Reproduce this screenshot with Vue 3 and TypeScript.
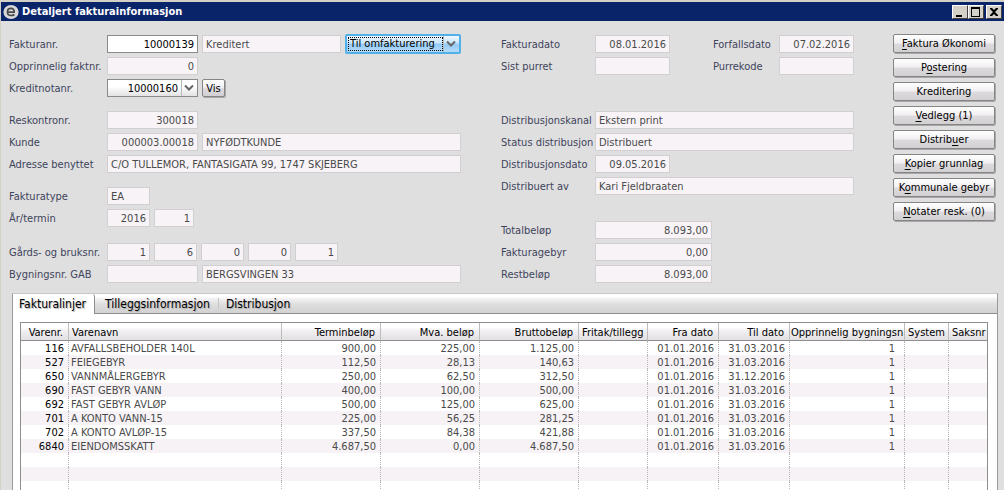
<script setup lang="ts">
import { ref } from 'vue'

interface Column { name: string; width?: number; align: 'left' | 'right' }

const columns: Column[] = [
  { name: 'Varenr.', width: 48, align: 'right' },
  { name: 'Varenavn', align: 'left' },
  { name: 'Terminbeløp', width: 99, align: 'right' },
  { name: 'Mva. beløp', width: 99, align: 'right' },
  { name: 'Bruttobeløp', width: 99, align: 'right' },
  { name: 'Fritak/tillegg', width: 69, align: 'left' },
  { name: 'Fra dato', width: 71, align: 'right' },
  { name: 'Til dato', width: 71, align: 'right' },
  { name: 'Opprinnelig bygningsn', width: 115, align: 'left' },
  { name: 'System', width: 44, align: 'left' },
  { name: 'Saksnr', width: 38, align: 'left' },
]

const blank: string[] = ['', '', '', '', '', '', '', '', '', '', '']
const rows: string[][] = [
  ['116', 'AVFALLSBEHOLDER 140L', '900,00', '225,00', '1.125,00', '', '01.01.2016', '31.03.2016', '1', '', ''],
  ['527', 'FEIEGEBYR', '112,50', '28,13', '140,63', '', '01.01.2016', '31.03.2016', '1', '', ''],
  ['650', 'VANNMÅLERGEBYR', '250,00', '62,50', '312,50', '', '01.01.2016', '31.12.2016', '1', '', ''],
  ['690', 'FAST GEBYR VANN', '400,00', '100,00', '500,00', '', '01.01.2016', '31.03.2016', '1', '', ''],
  ['692', 'FAST GEBYR AVLØP', '500,00', '125,00', '625,00', '', '01.01.2016', '31.03.2016', '1', '', ''],
  ['701', 'A KONTO VANN-15', '225,00', '56,25', '281,25', '', '01.01.2016', '31.03.2016', '1', '', ''],
  ['702', 'A KONTO AVLØP-15', '337,50', '84,38', '421,88', '', '01.01.2016', '31.03.2016', '1', '', ''],
  ['6840', 'EIENDOMSSKATT', '4.687,50', '0,00', '4.687,50', '', '01.01.2016', '31.03.2016', '1', '', ''],
  blank, blank, blank, blank,
]

// Each action label is split around its underlined access key.
const actions: [string, string, string][] = [
  ['', 'F', 'aktura Økonomi'],
  ['P', 'o', 'stering'],
  ['Kreditering', '', ''],
  ['', 'V', 'edlegg (1)'],
  ['Distrib', 'u', 'er'],
  ['', 'K', 'opier grunnlag'],
  ['K', 'o', 'mmunale gebyr'],
  ['', 'N', 'otater resk. (0)'],
]

const tabs = ['Fakturalinjer', 'Tilleggsinformasjon', 'Distribusjon']
const activeTab = ref(0)
const property = ['1', '6', '0', '0', '1']
const invoiceNo = ref('10000139')
const creditNote = ref('10000160')
const status = ref('Til omfakturering')
</script>

<template>
  <div class="window">
    <header class="titlebar">
      <svg class="logo" viewBox="0 0 16 16" aria-hidden="true">
        <ellipse cx="8" cy="8" rx="7.6" ry="7" fill="#d9d9d9" />
        <path d="M4.6 8.1H11.2C11.2 5.8 9.9 4.4 8 4.4C5.8 4.4 4.4 6 4.4 8C4.4 10.2 5.9 11.5 8.1 11.5C9.4 11.5 10.5 11.2 11.4 10.5" fill="none" stroke="#4a4a4a" stroke-width="1.600" />
      </svg>
      <h1>Detaljert fakturainformasjon</h1>
      <div class="controls">
        <button type="button" aria-label="Minimer"><svg viewBox="0 0 14 12"><path d="M3 9h6v2H3z" /></svg></button>
        <button type="button" aria-label="Maksimer"><svg viewBox="0 0 14 12"><path d="M2 1h9v10H2zM3 3v7h7V3z" fill-rule="evenodd" /></svg></button>
        <button type="button" class="close" aria-label="Lukk"><svg viewBox="0 0 14 12"><path d="M3 2h2l2 2 2-2h2v1L8 6l3 3v1H9L7 8l-2 2H3V9l3-3-3-3z" /></svg></button>
      </div>
    </header>

    <main class="body">
      <form class="form" @submit.prevent>
        <div class="column">
          <div class="group">
            <div class="row">
              <label for="fakturanr">Fakturanr.</label>
              <input id="fakturanr" v-model="invoiceNo" class="w-number num editable">
              <input class="grow" value="Kreditert" aria-label="Status" readonly>
              <div class="combo focus">
                <select v-model="status" aria-label="Handling"><option>Til omfakturering</option></select>
                <svg class="arrow" viewBox="0 0 10 8" aria-hidden="true"><path d="M1 1.500L5 5.500L9 1.500" /></svg>
              </div>
            </div>
            <div class="row">
              <label for="opprinnelig">Opprinnelig faktnr.</label>
              <input id="opprinnelig" class="w-number num" value="0" readonly>
            </div>
            <div class="row">
              <label for="kreditnota">Kreditnotanr.</label>
              <div class="combo w-number">
                <select id="kreditnota" v-model="creditNote" class="num"><option>10000160</option></select>
                <svg class="arrow" viewBox="0 0 10 8" aria-hidden="true"><path d="M1 1.500L5 5.500L9 1.500" /></svg>
              </div>
              <button type="button" class="btn vis">Vis</button>
            </div>
          </div>
          <div class="group">
            <div class="row">
              <label for="reskontro">Reskontronr.</label>
              <input id="reskontro" class="w-number num" value="300018" readonly>
            </div>
            <div class="row">
              <label for="kunde">Kunde</label>
              <input id="kunde" class="w-number num" value="000003.00018" readonly>
              <input class="grow" value="NYFØDTKUNDE" aria-label="Kundenavn" readonly>
            </div>
            <div class="row">
              <label for="adresse">Adresse benyttet</label>
              <input id="adresse" class="grow" value="C/O TULLEMOR, FANTASIGATA 99, 1747 SKJEBERG" readonly>
            </div>
          </div>
          <div class="group g-type">
            <div class="row">
              <label for="type">Fakturatype</label>
              <input id="type" class="w-small" value="EA" readonly>
            </div>
            <div class="row">
              <label for="aar">År/termin</label>
              <input id="aar" class="w-small num" value="2016" readonly>
              <input class="w-term num" value="1" aria-label="Termin" readonly>
            </div>
          </div>
          <div class="group">
            <div class="row">
              <label for="gard0">Gårds- og bruksnr.</label>
              <input v-for="(p, i) in property" :id="'gard' + i" :key="i" class="w-small num" :value="p" :aria-label="'Gårds- og bruksnr. ' + (i + 1)" readonly>
            </div>
            <div class="row">
              <label for="bygning">Bygningsnr. GAB</label>
              <input id="bygning" class="w-number" value="" readonly>
              <input class="grow" value="BERGSVINGEN 33" aria-label="Gateadresse" readonly>
            </div>
          </div>
        </div>

        <div class="column second">
          <div class="group g-dates">
            <div class="row">
              <label for="fdato">Fakturadato</label>
              <input id="fdato" class="w-date num" value="08.01.2016" readonly>
              <label for="forfall" class="end">Forfallsdato</label>
              <input id="forfall" class="w-date num" value="07.02.2016" readonly>
            </div>
            <div class="row">
              <label for="purret">Sist purret</label>
              <input id="purret" class="w-date" value="" readonly>
              <label for="purrekode" class="end">Purrekode</label>
              <input id="purrekode" class="w-date" value="" readonly>
            </div>
          </div>
          <div class="group g-distribution">
            <div class="row">
              <label for="kanal">Distribusjonskanal</label>
              <input id="kanal" class="grow" value="Ekstern print" readonly>
            </div>
            <div class="row">
              <label for="dstatus">Status distribusjon</label>
              <input id="dstatus" class="grow" value="Distribuert" readonly>
            </div>
            <div class="row">
              <label for="ddato">Distribusjonsdato</label>
              <input id="ddato" class="w-date num" value="09.05.2016" readonly>
            </div>
            <div class="row">
              <label for="dav">Distribuert av</label>
              <input id="dav" class="grow" value="Kari Fjeldbraaten" readonly>
            </div>
          </div>
          <div class="group">
            <div class="row">
              <label for="total">Totalbeløp</label>
              <input id="total" class="w-amount num" value="8.093,00" readonly>
            </div>
            <div class="row">
              <label for="gebyr">Fakturagebyr</label>
              <input id="gebyr" class="w-amount num" value="0,00" readonly>
            </div>
            <div class="row">
              <label for="rest">Restbeløp</label>
              <input id="rest" class="w-amount num" value="8.093,00" readonly>
            </div>
          </div>
        </div>

        <div class="actions">
          <button v-for="(a, i) in actions" :key="i" type="button" class="btn">{{ a[0] }}<u v-if="a[1]">{{ a[1] }}</u>{{ a[2] }}</button>
        </div>
      </form>

      <section class="panel">
        <div class="tabs" role="tablist">
          <button v-for="(t, i) in tabs" :key="t" type="button" role="tab" :aria-selected="activeTab === i" :class="{ active: activeTab === i }" @click="activeTab = i">{{ t }}</button>
        </div>
        <div class="sheet">
          <table>
            <colgroup>
              <col v-for="c in columns" :key="c.name" :style="c.width ? { width: c.width + 'px' } : undefined">
            </colgroup>
            <thead>
              <tr><th v-for="(c, j) in columns" :key="c.name" :class="[c.align, { building: j === 8 }]">{{ c.name }}</th></tr>
            </thead>
            <tbody>
              <tr v-for="(r, i) in rows" :key="i">
                <td v-for="(v, j) in r" :key="j" :class="j === 8 ? 'right building' : columns[j].align">{{ v }}</td>
              </tr>
            </tbody>
          </table>
        </div>
      </section>
    </main>
  </div>
</template>

<style>
body { margin: 0; overflow: hidden; }
</style>

<style scoped>
* { box-sizing: border-box; }
.window {
  display: flex;
  flex-direction: column;
  height: 100vh;
  overflow: hidden;
  border-top: 2px solid #d4d0c8;
  border-left: 1px solid #d4d0c8;
  background: #dfdfdf;
  color: #3e445c;
  font: 11px/14px Tahoma, "DejaVu Sans Condensed", "DejaVu Sans", sans-serif;
}
button, input, select { font: inherit; margin: 0; }
.titlebar {
  display: flex;
  align-items: center;
  flex: none;
  height: 19px;
  padding: 0 2px;
  background: #0a246a;
  color: #fff;
}
.logo { width: 16px; height: 16px; margin-right: 3px; }
h1 { flex: 1; margin: 0; font-size: 11px; line-height: 19px; font-weight: bold; }
.controls { display: flex; }
.controls button {
  width: 16px;
  height: 14px;
  padding: 0;
  border: 1px solid;
  border-color: #fff #404040 #404040 #fff;
  background: #d4d0c8;
}
.controls .close { margin-left: 2px; }
.controls svg { display: block; width: 14px; height: 12px; }
.body { display: flex; flex-direction: column; flex: 1; min-height: 0; }
.form {
  display: grid;
  grid-template-columns: 452fr 354fr 102px;
  gap: 39px;
  padding: 14px 9px 0 8px;
}
.group { display: flex; flex-direction: column; gap: 4px; margin-bottom: 14px; }
.g-type { margin-bottom: 16px; }
.g-dates { margin-bottom: 36px; }
.g-distribution { margin-bottom: 26px; }
.column { min-width: 0; }
.second { padding-left: 1px; }
.column > .group:last-child { margin-bottom: 0; }
.row { display: flex; align-items: center; gap: 4px; height: 18px; }
label { flex: 0 0 94px; min-width: 0; padding-top: 2px; white-space: nowrap; }
.second label { flex-basis: 90px; }
.second label.end { flex-basis: 62px; margin-left: auto; }
input {
  height: 18px;
  min-width: 0;
  padding: 0 3px;
  border: 1px solid #d2cfd3;
  border-radius: 0;
  background: #f7f3f7;
  color: #4a4a4a;
  outline: none;
}
.num { text-align: right; }
input.editable { border-color: #8a8a8a; background: #fff; color: #000; }
.grow { flex: 1; }
.w-number { flex: none; width: 91px; }
.w-small { width: 43px; }
.w-term { width: 40px; }
.w-date { width: 75px; }
.w-amount { width: 117px; }
.combo {
  display: flex;
  align-items: center;
  position: relative;
  height: 18px;
  border: 1px solid #8a8a8a;
  background: linear-gradient(#fff, #fff 40%, #e4e2e4);
}
.combo select {
  flex: 1;
  width: 100%;
  height: 16px;
  padding: 1px 19px 0 3px;
  border: 0;
  appearance: none;
  background: none;
  color: #000;
  outline: none;
}
.combo .arrow {
  position: absolute;
  right: 3px;
  top: 4px;
  width: 10px;
  height: 8px;
  fill: none;
  stroke: #666;
  stroke-width: 2;
  pointer-events: none;
}
.combo::after { content: ""; position: absolute; right: 15px; top: 0; bottom: 0; border-left: 1px solid #b8b8b8; }
.combo.focus {
  flex: none;
  width: 116px;
  height: 20px;
  border: 2px solid #52b0e8;
  border-radius: 2px;
  background: linear-gradient(#f0f8ff, #c8e4fa 45%, #94caf5 50%, #b4dcfa);
}
.combo.focus select { width: 95px; flex: none; height: 14px; margin-left: 1px; padding: 0 1px; line-height: 12px; border: 1px dotted #000; }
.btn {
  height: 19px;
  padding: 1px 2px 0;
  border: 1px solid #858585;
  border-radius: 2px;
  background: linear-gradient(#fff, #f2f0f2 45%, #dcdadc 55%, #d2d0d2);
  box-shadow: 1px 1px 0 #a8a8a8;
  color: #000;
  line-height: 16px;
  white-space: nowrap;
}
.vis { width: 23px; height: 18px; }
.actions { display: flex; flex-direction: column; gap: 5px; margin-top: -1px; }
u { text-underline-offset: 2px; }
.panel {
  flex: none;
  margin: 10px 6px 0 11px;
  border: 1px solid #9a9a9a;
  border-top-color: #c8c8c8;
  border-bottom: 0;
  background: #fff;
}
.tabs {
  display: flex;
  height: 20px;
  border-bottom: 1px solid #8e8e8e;
  background: linear-gradient(#fff 15%, #f4f1f4 25%, #dedede 55%, #d2d2d2);
}
.tabs button {
  padding: 0 8px 0 10px;
  border: 0;
  background: none;
  color: #000;
  font-size: 12px;
  line-height: 18px;
  text-shadow: 1px 1px 1px #a8a8a8;
  white-space: nowrap;
}
.tabs button.active {
  height: 20px;
  padding: 0 8px 0 6px;
  border-right: 1px solid #8e8e8e;
  border-radius: 0 3px 0 0;
  background: #fff;
}
.tabs button + button:not(.active) + button {
  padding-left: 8px;
  background: linear-gradient(#c4c4c4, #c4c4c4) 0 4px / 1px 11px no-repeat;
}
.sheet { padding: 8px 9px 0 7px; }
table {
  width: 100%;
  table-layout: fixed;
  border-collapse: separate;
  border-spacing: 0;
  border: 1px solid #8e8e8e;
}
th, td { overflow: hidden; padding: 0; white-space: nowrap; }
th {
  height: 18px;
  padding: 2px 5px 0 3px;
  border-right: 1px solid #bcbcbc;
  border-bottom: 1px solid #8e8e8e;
  background: linear-gradient(#fff 25%, #f0eef0 50%, #e2e0e2);
  color: #000;
  font-weight: normal;
}
th.left { padding-right: 0; }
th.building { padding-left: 1px; }
td { height: 14px; padding: 1px 4px 0 2px; border-right: 1px dotted #b8b8b8; color: #4a4a4a; line-height: 13px; }
td.building { padding-right: 9px; }
td:first-child { color: #000; }
th:last-child, td:last-child { border-right: 0; }
tbody tr:nth-child(even) { background: #f6f2f6; }
.left { text-align: left; }
.right { text-align: right; }
</style>
